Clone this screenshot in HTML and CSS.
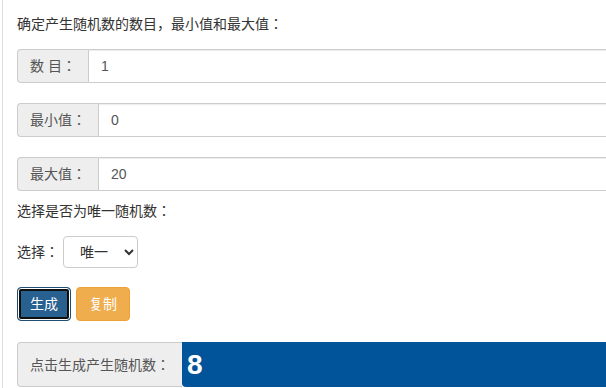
FILE: index.html
```html
<!DOCTYPE html>
<html>
<head>
<meta charset="utf-8">
<title>随机数生成</title>
<link rel="stylesheet" href="styles.css">
</head>
<body>
<div class="frame">
  <p class="intro">确定产生随机数的数目，最小值和最大值：</p>
  <div class="input-group gap-lg">
    <span class="addon">数 目：</span>
    <input class="field" type="text" value="1">
  </div>
  <div class="input-group gap-lg">
    <span class="addon">最小值：</span>
    <input class="field" type="text" value="0">
  </div>
  <div class="input-group gap-sm">
    <span class="addon">最大值：</span>
    <input class="field" type="text" value="20">
  </div>
  <p class="intro second">选择是否为唯一随机数：</p>
  <div class="select-row">
    <label class="select-label">选择：</label>
    <select class="choice">
      <option>唯一</option>
      <option>不唯一</option>
    </select>
  </div>
  <div class="buttons">
    <button class="btn btn-primary focused" type="button">生成</button>
    <button class="btn btn-warning" type="button">复制</button>
  </div>
  <div class="result-group">
    <span class="addon result-label">点击生成产生随机数：</span>
    <span class="result-value">8</span>
  </div>
</div>
</body>
</html>
```

FILE: styles.css
```css
html, body {
  margin: 0;
  padding: 0;
  overflow: hidden;
  background: #fff;
}

body {
  font-family: "Liberation Sans", Arial, "Noto Sans CJK JP", "Noto Sans CJK SC", sans-serif;
  font-size: 14px;
  line-height: 20px;
  color: #333;
}

.frame {
  margin-left: 2px;
  border-left: 1px solid #ddd;
  padding: 14px 0 0 14px;
  min-height: 400px;
  box-sizing: border-box;
}

.intro {
  margin: 0 0 15px;
  line-height: 20px;
}

.intro.second {
  margin-bottom: 15px;
}

.input-group {
  display: flex;
  width: 640px;
  height: 34px;
}

.gap-lg { margin-bottom: 20px; }
.gap-sm { margin-bottom: 10px; }

.addon {
  display: flex;
  align-items: center;
  padding: 0 12px;
  background: #eee;
  border: 1px solid #ccc;
  border-right: 0;
  border-radius: 4px 0 0 4px;
  color: #555;
  white-space: pre;
  box-sizing: border-box;
}

.field {
  flex: 1;
  height: 34px;
  box-sizing: border-box;
  border: 1px solid #ccc;
  border-radius: 0 4px 4px 0;
  padding: 0 12px;
  font-family: inherit;
  font-size: 14px;
  color: #555;
  background: #fff;
  box-shadow: inset 0 1px 1px rgba(0,0,0,.075);
  outline: none;
}

.select-row {
  display: flex;
  align-items: center;
  height: 32px;
  margin-bottom: 19px;
}

.select-label {
  color: #333;
  margin-right: 4px;
}

.choice {
  width: 75px;
  height: 32px;
  box-sizing: border-box;
  border: 1px solid #ccc;
  border-radius: 4px;
  background: #fff;
  padding: 0 4px 0 12px;
  font-family: inherit;
  font-size: 14px;
  color: #333;
}

.buttons {
  display: flex;
  gap: 5px;
  margin-bottom: 21px;
}

.btn {
  height: 34px;
  padding: 0 12px;
  border-radius: 4px;
  font-family: inherit;
  font-size: 14px;
  line-height: 20px;
  color: #fff;
  box-sizing: border-box;
  cursor: pointer;
}

.btn-primary {
  background: #286090;
  border: 1px solid #204d74;
}

.btn-primary.focused {
  box-shadow: inset 0 0 0 1px #ffffff, inset 0 0 0 3px #101010;
}

.btn-warning {
  background: #f0ad4e;
  border: 1px solid #eea236;
}

.result-group {
  display: flex;
  width: 640px;
  height: 45px;
}

.result-label {
  height: 45px;
}

.result-value {
  flex: 1;
  display: flex;
  align-items: center;
  padding-left: 5px;
  background: #02549a;
  border-radius: 0 4px 4px 4px;
  color: #fff;
  font-family: "Liberation Sans", Arial, sans-serif;
  font-weight: bold;
  font-size: 28px;
}
```
